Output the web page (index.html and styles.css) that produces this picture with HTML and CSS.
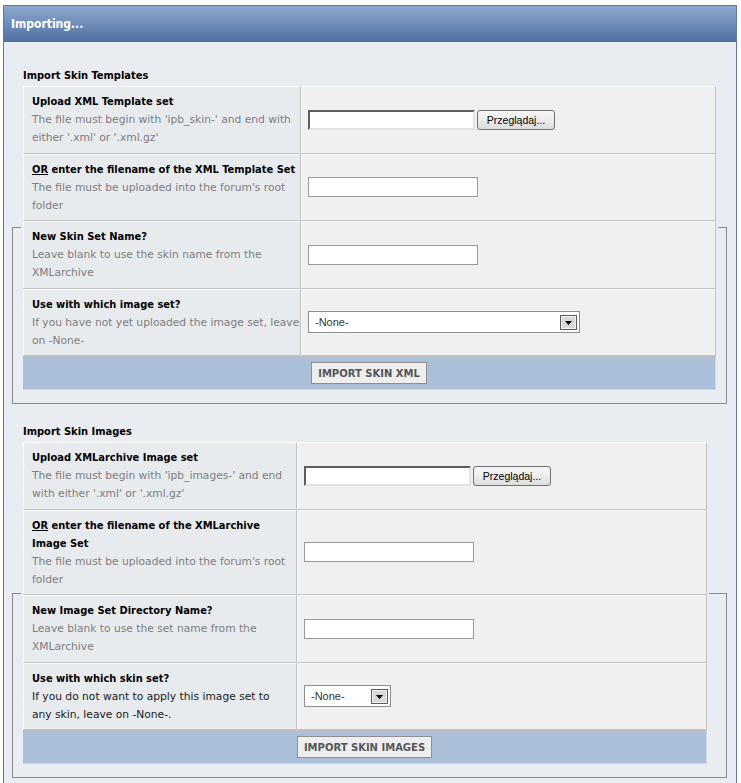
FILE: index.html
```html
<!DOCTYPE html>
<html lang="en">
<head>
<meta charset="utf-8">
<title>Importing...</title>
<link rel="stylesheet" href="styles.css">
</head>
<body>
<div class="window">
  <div class="titlebar">Importing...</div>
  <div class="content">

    <section class="group">
      <h3 class="group-title">Import Skin Templates</h3>
      <div class="frame frame-templates">
        <table class="form-table table-wide">
          <colgroup><col class="col-label"><col></colgroup>
          <tr>
            <td class="cell-label">
              <div class="label">Upload XML Template set</div>
              <div class="hint">The file must begin with 'ipb_skin-' and end with<br>either '.xml' or '.xml.gz'</div>
            </td>
            <td class="cell-field">
              <div class="file-field"><input class="file-input" type="text"><button class="browse-btn" type="button">Przeglądaj...</button></div>
            </td>
          </tr>
          <tr>
            <td class="cell-label">
              <div class="label"><u>OR</u> enter the filename of the XML Template Set</div>
              <div class="hint">The file must be uploaded into the forum's root<br>folder</div>
            </td>
            <td class="cell-field"><input class="text-input" type="text"></td>
          </tr>
          <tr>
            <td class="cell-label">
              <div class="label">New Skin Set Name?</div>
              <div class="hint">Leave blank to use the skin name from the<br>XMLarchive</div>
            </td>
            <td class="cell-field"><input class="text-input" type="text"></td>
          </tr>
          <tr>
            <td class="cell-label">
              <div class="label">Use with which image set?</div>
              <div class="hint">If you have not yet uploaded the image set, leave<br>on -None-</div>
            </td>
            <td class="cell-field">
              <div class="select select-wide"><span class="select-value">-None-</span><span class="select-arrow"><svg width="17" height="15" viewBox="0 0 17 15"><rect x="0.5" y="0.5" width="16" height="14" fill="#d9d9d9" stroke="#5c5c5c"/><rect x="1.5" y="1.5" width="14" height="12" fill="none" stroke="#f4f4f4"/><path d="M5 6h7l-3.5 4z" fill="#000"/></svg></span></div>
            </td>
          </tr>
          <tr>
            <td class="cell-footer" colspan="2"><button class="submit-btn" type="button">IMPORT SKIN XML</button></td>
          </tr>
        </table>
      </div>
    </section>

    <section class="group group-second">
      <h3 class="group-title">Import Skin Images</h3>
      <div class="frame frame-images">
        <table class="form-table table-narrow">
          <colgroup><col class="col-label"><col></colgroup>
          <tr>
            <td class="cell-label">
              <div class="label">Upload XMLarchive Image set</div>
              <div class="hint">The file must begin with 'ipb_images-' and end<br>with either '.xml' or '.xml.gz'</div>
            </td>
            <td class="cell-field">
              <div class="file-field"><input class="file-input" type="text"><button class="browse-btn" type="button">Przeglądaj...</button></div>
            </td>
          </tr>
          <tr>
            <td class="cell-label">
              <div class="label"><u>OR</u> enter the filename of the XMLarchive<br>Image Set</div>
              <div class="hint">The file must be uploaded into the forum's root<br>folder</div>
            </td>
            <td class="cell-field"><input class="text-input" type="text"></td>
          </tr>
          <tr>
            <td class="cell-label">
              <div class="label">New Image Set Directory Name?</div>
              <div class="hint">Leave blank to use the set name from the<br>XMLarchive</div>
            </td>
            <td class="cell-field"><input class="text-input" type="text"></td>
          </tr>
          <tr>
            <td class="cell-label">
              <div class="label">Use with which skin set?</div>
              <div class="hint hint-dark">If you do not want to apply this image set to<br>any skin, leave on -None-.</div>
            </td>
            <td class="cell-field">
              <div class="select select-small"><span class="select-value">-None-</span><span class="select-arrow"><svg width="17" height="15" viewBox="0 0 17 15"><rect x="0.5" y="0.5" width="16" height="14" fill="#d9d9d9" stroke="#5c5c5c"/><rect x="1.5" y="1.5" width="14" height="12" fill="none" stroke="#f4f4f4"/><path d="M5 6h7l-3.5 4z" fill="#000"/></svg></span></div>
            </td>
          </tr>
          <tr>
            <td class="cell-footer" colspan="2"><button class="submit-btn" type="button">IMPORT SKIN IMAGES</button></td>
          </tr>
        </table>
      </div>
    </section>

  </div>
</div>
</body>
</html>
```

FILE: styles.css
```css
html {
  background: #ffffff;
}

body {
  margin: 0;
  font-family: "DejaVu Sans", Verdana, sans-serif;
  font-size: 11px;
  color: #000;
}

.window {
  margin: 5px 4px 0 3px;
  border: 1px solid #5a7aab;
  border-bottom: 0;
  background: #e9ecf0;
}

.titlebar {
  height: 36px;
  line-height: 36px;
  padding-left: 7px;
  background: linear-gradient(to bottom, #8ea7cd 0%, #6f8cb9 50%, #4f6f9f 100%);
  color: #ffffff;
  font-family: "DejaVu Sans Condensed", "DejaVu Sans", sans-serif;
  font-stretch: condensed;
  font-weight: bold;
  font-size: 12px;
}

.content {
  padding: 27px 9px 10px 8px;
}

.group-second {
  margin-top: 21px;
}

.group-title {
  margin: 0 0 3px 11px;
  font-family: "DejaVu Sans Condensed", "DejaVu Sans", sans-serif;
  font-stretch: condensed;
  font-weight: bold;
  font-size: 11px;
  line-height: 14px;
}

.frame {
  position: relative;
  padding: 0 0 14px 11px;
}

.frame::before {
  content: "";
  position: absolute;
  left: 0;
  right: 0;
  bottom: 0;
  border: 1px solid #8a8a8a;
}

.frame-templates::before {
  top: 141px;
}

.frame-images::before {
  top: 151px;
}

.form-table {
  position: relative;
  z-index: 1;
  border-collapse: separate;
  border-spacing: 0;
  table-layout: fixed;
  box-shadow: 0 0 0 2px #e9ecf0;
}

.table-wide {
  width: 693px;
}

.table-wide .col-label {
  width: 278px;
}

.table-narrow {
  width: 684px;
}

.table-narrow .col-label {
  width: 274px;
}

.form-table td {
  border-top: 1px solid #fbfbfb;
  border-left: 1px solid #fbfbfb;
  border-right: 1px solid #c2c2c2;
  border-bottom: 1px solid #c2c2c2;
}

.cell-label {
  background: #e8ebee;
  padding: 6px 4px 5.5px 8px;
  vertical-align: top;
  white-space: nowrap;
}

.cell-field {
  background: #f0f0f0;
  padding: 0 6px;
  vertical-align: middle;
}

.label {
  font-family: "DejaVu Sans Condensed", "DejaVu Sans", sans-serif;
  font-stretch: condensed;
  font-weight: bold;
  font-size: 11px;
  line-height: 18px;
  color: #000;
}

.hint {
  font-family: "DejaVu Sans", Verdana, sans-serif;
  font-size: 10.7px;
  line-height: 18px;
  color: #7d7d7d;
}

.hint-dark {
  color: #1a1a1a;
}

.file-field {
  display: flex;
  align-items: center;
  gap: 2px;
}

.file-input {
  box-sizing: border-box;
  width: 167px;
  height: 20px;
  margin: 0;
  padding: 0 2px;
  border: 2px solid;
  border-color: #5c5c5c #e2e2e2 #e2e2e2 #5c5c5c;
  background: #ffffff;
}

.browse-btn {
  box-sizing: border-box;
  width: 78px;
  height: 20px;
  margin: 0;
  padding: 0;
  border: 1px solid #707070;
  border-radius: 3px;
  background: linear-gradient(to bottom, #f6f6f6 0%, #ececec 50%, #dcdcdc 100%);
  font-family: "Liberation Sans", Arial, sans-serif;
  font-size: 10.5px;
  color: #000;
}

.text-input {
  display: block;
  box-sizing: border-box;
  width: 170px;
  height: 20px;
  margin: 0;
  padding: 0 2px;
  border: 1px solid #999999;
  background: #ffffff;
}

.select {
  box-sizing: border-box;
  height: 22px;
  display: flex;
  align-items: center;
  justify-content: space-between;
  padding: 0 2px 0 6px;
  border: 1px solid #8e8e8e;
  background: #ffffff;
  font-family: "Liberation Sans", Arial, sans-serif;
  font-size: 11px;
  color: #333;
}

.select-wide {
  width: 272px;
}

.select-small {
  width: 87px;
}

.select-arrow {
  display: flex;
  width: 17px;
  height: 15px;
}

.cell-footer {
  background: #abbfd8;
  padding: 5px 0;
  text-align: center;
}

.form-table .cell-footer {
  border-top: 1px solid #bcbcbc;
  border-left: 0;
  border-right: 1px solid #cdd8e6;
  border-bottom: 1px solid #cdd8e6;
}

.submit-btn {
  box-sizing: border-box;
  height: 22px;
  margin: 0;
  padding: 0 6px;
  border: 1px solid #8f8f8f;
  background: #eeeeee;
  font-family: "DejaVu Sans", Verdana, sans-serif;
  font-weight: bold;
  font-size: 10px;
  color: #555555;
}
```
